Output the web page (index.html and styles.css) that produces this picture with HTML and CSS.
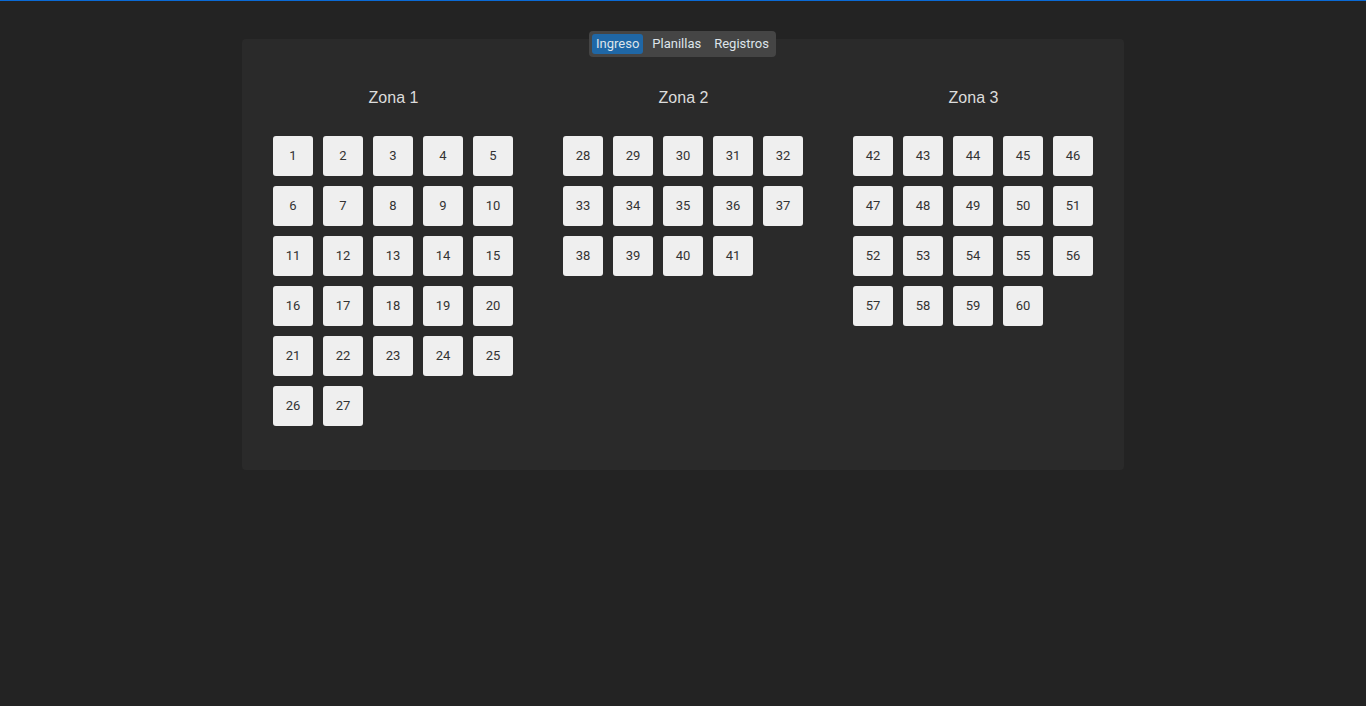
FILE: index.html
```html
<!DOCTYPE html>
<html lang="es">
<head>
<meta charset="utf-8">
<title>Ingreso</title>
<link rel="stylesheet" href="styles.css">
</head>
<body>
<div class="topline"></div>
<main class="panel">
  <nav class="tabs">
    <button class="tab active">Ingreso</button>
    <button class="tab">Planillas</button>
    <button class="tab">Registros</button>
  </nav>
  <div class="zones">
    <section class="zone">
      <h2>Zona 1</h2>
      <div class="grid">
        <button class="seat">1</button><button class="seat">2</button><button class="seat">3</button><button class="seat">4</button><button class="seat">5</button>
        <button class="seat">6</button><button class="seat">7</button><button class="seat">8</button><button class="seat">9</button><button class="seat">10</button>
        <button class="seat">11</button><button class="seat">12</button><button class="seat">13</button><button class="seat">14</button><button class="seat">15</button>
        <button class="seat">16</button><button class="seat">17</button><button class="seat">18</button><button class="seat">19</button><button class="seat">20</button>
        <button class="seat">21</button><button class="seat">22</button><button class="seat">23</button><button class="seat">24</button><button class="seat">25</button>
        <button class="seat">26</button><button class="seat">27</button>
      </div>
    </section>
    <section class="zone">
      <h2>Zona 2</h2>
      <div class="grid">
        <button class="seat">28</button><button class="seat">29</button><button class="seat">30</button><button class="seat">31</button><button class="seat">32</button>
        <button class="seat">33</button><button class="seat">34</button><button class="seat">35</button><button class="seat">36</button><button class="seat">37</button>
        <button class="seat">38</button><button class="seat">39</button><button class="seat">40</button><button class="seat">41</button>
      </div>
    </section>
    <section class="zone">
      <h2>Zona 3</h2>
      <div class="grid">
        <button class="seat">42</button><button class="seat">43</button><button class="seat">44</button><button class="seat">45</button><button class="seat">46</button>
        <button class="seat">47</button><button class="seat">48</button><button class="seat">49</button><button class="seat">50</button><button class="seat">51</button>
        <button class="seat">52</button><button class="seat">53</button><button class="seat">54</button><button class="seat">55</button><button class="seat">56</button>
        <button class="seat">57</button><button class="seat">58</button><button class="seat">59</button><button class="seat">60</button>
      </div>
    </section>
  </div>
</main>
</body>
</html>
```
FILE: styles.css
```css
html, body {
  margin: 0;
  padding: 0;
  background: #232323;
  height: 100%;
}
body {
  font-family: "Liberation Sans", Arial, sans-serif;
}
.topline {
  height: 1px;
  background: #0a6ad6;
}
.panel {
  position: relative;
  width: 882px;
  margin: 38px auto 0;
  background: #2a2a2a;
  border-radius: 4px;
  padding: 0 0 44px;
  box-sizing: border-box;
}
.tabs {
  position: absolute;
  top: -8px;
  left: 347px;
  display: flex;
  gap: 5px;
  padding: 3px;
  background: #454545;
  border-radius: 4px;
  height: 26px;
  box-sizing: border-box;
}
.tab {
  font-family: Roboto, "Noto Sans", sans-serif;
  font-size: 13px;
  color: #dde4ea;
  background: transparent;
  border: 0;
  border-radius: 3px;
  padding: 0 4px;
  margin: 0;
  height: 20px;
  line-height: 20px;
  cursor: pointer;
}
.tab.active {
  background: #1f67a6;
}
.zones {
  display: grid;
  grid-template-columns: repeat(3, 290px);
  padding: 0 6px;
}
.zone {
  display: flex;
  flex-direction: column;
  align-items: center;
}
.zone h2 {
  margin: 49px 0 0 1px;
  height: 20px;
  line-height: 20px;
  font-size: 16px;
  font-weight: normal;
  color: #dcdcdc;
}
.grid {
  margin-top: 28px;
  width: 240px;
  display: grid;
  grid-template-columns: repeat(5, 40px);
  grid-auto-rows: 40px;
  gap: 10px;
}
.seat {
  width: 40px;
  height: 40px;
  padding: 0 0 2px;
  border: 0;
  border-radius: 3px;
  background: #efefef;
  color: #333;
  font-family: Roboto, "Noto Sans", sans-serif;
  font-size: 13px;
  cursor: pointer;
}
```
